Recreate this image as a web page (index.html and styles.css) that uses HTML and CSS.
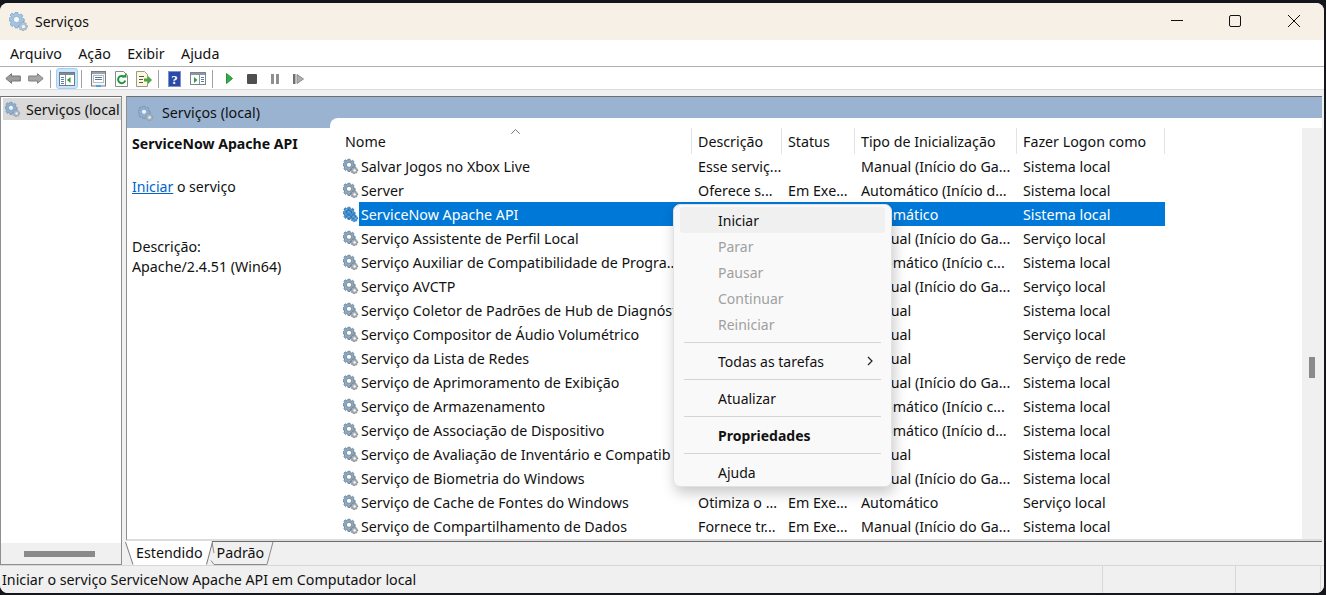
FILE: index.html
```html
<!DOCTYPE html>
<html lang="pt-BR">
<head>
<meta charset="utf-8">
<title>Serviços</title>
<link rel="stylesheet" href="styles.css">
</head>
<body>
<svg class="defs" width="0" height="0" aria-hidden="true">
  <defs>
    <pattern id="dither" width="2" height="2" patternUnits="userSpaceOnUse" patternTransform="scale(.8)">
      <rect width="2" height="2" fill="#0a6fc4"/>
      <rect width="1" height="1" fill="#8db6d6"/>
      <rect x="1" y="1" width="1" height="1" fill="#8db6d6"/>
    </pattern>
    <symbol id="gear" viewBox="0 0 20 20">
      <path class="g-body" stroke-width=".8" d="M6.200 1.500h2.600l.4 1.900 1.200.5 1.600-1 1.900 1.800-1.100 1.600.5 1.200 1.900.4v2.600l-1.900.4-.5 1.200 1.100 1.600-1.900 1.900-1.600-1.100-1.200.5-.4 1.900H6.200l-.4-1.900-1.200-.5-1.600 1.100L1.100 13l1.100-1.600-.5-1.200-1.900-.4V7.200l1.900-.4.5-1.200-1.100-1.600L3 2.200l1.600 1 1.200-.5z"/>
      <circle class="g-eye" cx="7.500" cy="8.500" r="3.200" stroke-width=".8"/>
      <path class="g-small" stroke-width=".7" d="M14 11l1.300.2.3 1 .9-.3.9.9-.5.9.6.8 1 .1v1.400l-1 .2-.4.9.5.8-1 1-.8-.5-.9.4-.2 1h-1.400l-.2-1-.9-.4-.8.5-1-1 .5-.8-.4-.9-1-.2v-1.400l1-.1.5-.8-.5-.9 1-.9.8.3.4-1z"/>
      <circle class="g-eye2" cx="14.500" cy="15.500" r="1.500"/>
    </symbol>
  </defs>
</svg>

<div class="window">
  <header class="titlebar">
    <svg class="title-icon"><use href="#gear"/></svg>
    <span class="title-text">Serviços</span>
    <div class="win-controls">
      <svg class="win-btn" viewBox="0 0 12 12"><path d="M0 5.500h12" stroke="#111"/></svg>
      <svg class="win-btn" viewBox="0 0 12 12"><rect x=".5" y=".5" width="11" height="11" rx="1.500" fill="none" stroke="#111"/></svg>
      <svg class="win-btn win-close" viewBox="0 0 12 12"><path d="M0 0l12 12M12 0L0 12" stroke="#111"/></svg>
    </div>
  </header>

  <nav class="menubar">
    <span>Arquivo</span><span>Ação</span><span>Exibir</span><span>Ajuda</span>
  </nav>

  <div class="toolbar">
    <svg class="tool t-back" viewBox="0 0 16 11"><path d="M6.500.7L.8 5.500l5.700 4.800V8h8.800V3H6.500z" fill="#9c9c9c" stroke="#747474"/></svg>
    <svg class="tool t-fwd" viewBox="0 0 16 11"><path d="M9.500.7l5.700 4.800-5.700 4.800V8H.7V3h8.800z" fill="#a6a6a6" stroke="#808080"/></svg>
    <i class="tsep s1"></i>
    <span class="tool-active">
      <svg class="tool-16" viewBox="0 0 16 14"><rect x=".5" y=".5" width="15" height="13" fill="#fff" stroke="#6f7b85"/><rect x="1" y="1" width="14" height="2" fill="#7d8a96"/><path d="M6.500 3v10" stroke="#8a96a0"/><path d="M2 5.500h3M2 7.500h3M2 9.500h3M2 11.500h3" stroke="#5a7fa8"/><path d="M11.500 5v6L8 8z" fill="#2e9e3c"/></svg>
    </span>
    <i class="tsep s2"></i>
    <svg class="tool t-a" viewBox="0 0 15 16"><rect x=".5" y=".5" width="14" height="14.500" fill="#f4f6f8" stroke="#7b7b7b"/><rect x="1" y="1" width="13" height="2" fill="#9aa3ab"/><rect x="2.500" y="4.500" width="10" height="7" fill="#fff" stroke="#b5bcc4"/><path d="M4 6.500h7M4 8.500h7" stroke="#5d7a96"/><rect x="5" y="14" width="5" height="2" fill="#4aa3e0"/></svg>
    <svg class="tool t-b" viewBox="0 0 13 16"><path d="M.5.500h8l4 4v11H.5z" fill="#fff" stroke="#8a8a8a"/><path d="M9.300 6a3.600 3.600 0 1 0 .9 3.500" fill="none" stroke="#1f9a3a" stroke-width="2"/><path d="M7 6.500h4.500V2z" fill="#1f9a3a"/></svg>
    <svg class="tool t-c" viewBox="0 0 16 16"><path d="M.5.500h8l3 3v12h-11z" fill="#fdf7dc" stroke="#9a9a88"/><path d="M3 5.500h5M3 8.500h4M3 11.500h4" stroke="#4d5b66"/><path d="M8 7.500h4V5l4 4-4 4v-2.500H8z" fill="#49a83c"/></svg>
    <i class="tsep s3"></i>
    <svg class="tool t-d" viewBox="0 0 13 16"><rect width="13" height="16" fill="#2b4aa8"/><rect x=".5" y=".5" width="12" height="15" fill="none" stroke="#7d90d0"/><text x="6.500" y="13" class="help-q">?</text></svg>
    <svg class="tool t-e" viewBox="0 0 16 13"><rect x=".5" y=".5" width="15" height="12" fill="#fff" stroke="#7b858e"/><rect x="1" y="1" width="14" height="2" fill="#8a96a0"/><path d="M9.500 3v9" stroke="#8a96a0"/><path d="M11 5.500h3M11 7.500h3M11 9.500h3" stroke="#5a7fa8"/><path d="M4 5v6l3.500-3z" fill="#2e9e3c"/></svg>
    <i class="tsep s4"></i>
    <svg class="tool t-play" viewBox="0 0 7 11"><path d="M.5.500L6.500 5.500.5 10.500z" fill="#35ad45" stroke="#2a8f39"/></svg>
    <svg class="tool t-stop" viewBox="0 0 10 10"><rect width="10" height="10" rx="1" fill="#4f4f4f"/></svg>
    <svg class="tool t-pause" viewBox="0 0 8 10"><rect width="3" height="10" fill="#8f8f8f"/><rect x="5" width="3" height="10" fill="#8f8f8f"/></svg>
    <svg class="tool t-resume" viewBox="0 0 11 10"><rect width="2.500" height="10" fill="#6f6f6f"/><path d="M4 .5L10.500 5 4 9.500z" fill="#b0b0b0" stroke="#8a8a8a"/></svg>
  </div>

  <main class="content">
    <aside class="tree">
      <div class="tree-body">
        <div class="tree-item">
          <svg class="icon-16 soft"><use href="#gear"/></svg>
          <span>Serviços (local</span>
        </div>
      </div>
      <div class="hscroll"><i></i></div>
    </aside>

    <section class="pane">
      <div class="pane-frame">
        <div class="pane-body">
          <div class="leftcol">
            <div class="pane-head">
              <svg class="icon-16 soft"><use href="#gear"/></svg>
              <span>Serviços (local)</span>
            </div>
            <div class="detail">
              <h1>ServiceNow Apache API</h1>
              <p class="start"><a>Iniciar</a> o serviço</p>
              <p class="desc">Descrição:<br>Apache/2.4.51 (Win64)</p>
            </div>
          </div>
          <div class="listwrap">
            <div class="list">
              <div class="sort-caret"><svg viewBox="0 0 9 5" width="9" height="5"><path d="M.3 4.800L4.500.5l4.200 4.300" fill="none" stroke="#777"/></svg></div>
              <div class="row head">
                <span>Nome</span><span>Descrição</span><span>Status</span><span>Tipo de Inicialização</span><span>Fazer Logon como</span>
              </div>
              <div class="row"><span class="n"><svg class="icon-16"><use href="#gear"/></svg><b>Salvar Jogos no Xbox Live</b></span><span>Esse serviç...</span><span></span><span>Manual (Início do Ga...</span><span>Sistema local</span></div>
              <div class="row"><span class="n"><svg class="icon-16"><use href="#gear"/></svg><b>Server</b></span><span>Oferece s...</span><span>Em Exe...</span><span>Automático (Início d...</span><span>Sistema local</span></div>
              <div class="row sel"><span class="n"><svg class="icon-16"><use href="#gear"/></svg><b>ServiceNow Apache API</b></span><span></span><span></span><span>Automático</span><span>Sistema local</span></div>
              <div class="row"><span class="n"><svg class="icon-16"><use href="#gear"/></svg><b>Serviço Assistente de Perfil Local</b></span><span></span><span></span><span>Manual (Início do Ga...</span><span>Serviço local</span></div>
              <div class="row"><span class="n"><svg class="icon-16"><use href="#gear"/></svg><b>Serviço Auxiliar de Compatibilidade de Progra...</b></span><span></span><span></span><span>Automático (Início c...</span><span>Sistema local</span></div>
              <div class="row"><span class="n"><svg class="icon-16"><use href="#gear"/></svg><b>Serviço AVCTP</b></span><span></span><span></span><span>Manual (Início do Ga...</span><span>Serviço local</span></div>
              <div class="row"><span class="n"><svg class="icon-16"><use href="#gear"/></svg><b>Serviço Coletor de Padrões de Hub de Diagnóst...</b></span><span></span><span></span><span>Manual</span><span>Sistema local</span></div>
              <div class="row"><span class="n"><svg class="icon-16"><use href="#gear"/></svg><b>Serviço Compositor de Áudio Volumétrico</b></span><span></span><span></span><span>Manual</span><span>Serviço local</span></div>
              <div class="row"><span class="n"><svg class="icon-16"><use href="#gear"/></svg><b>Serviço da Lista de Redes</b></span><span></span><span></span><span>Manual</span><span>Serviço de rede</span></div>
              <div class="row"><span class="n"><svg class="icon-16"><use href="#gear"/></svg><b>Serviço de Aprimoramento de Exibição</b></span><span></span><span></span><span>Manual (Início do Ga...</span><span>Sistema local</span></div>
              <div class="row"><span class="n"><svg class="icon-16"><use href="#gear"/></svg><b>Serviço de Armazenamento</b></span><span></span><span></span><span>Automático (Início c...</span><span>Sistema local</span></div>
              <div class="row"><span class="n"><svg class="icon-16"><use href="#gear"/></svg><b>Serviço de Associação de Dispositivo</b></span><span></span><span></span><span>Automático (Início d...</span><span>Sistema local</span></div>
              <div class="row"><span class="n"><svg class="icon-16"><use href="#gear"/></svg><b>Serviço de Avaliação de Inventário e Compatib</b></span><span></span><span></span><span>Manual</span><span>Sistema local</span></div>
              <div class="row"><span class="n"><svg class="icon-16"><use href="#gear"/></svg><b>Serviço de Biometria do Windows</b></span><span></span><span></span><span>Manual (Início do Ga...</span><span>Sistema local</span></div>
              <div class="row"><span class="n"><svg class="icon-16"><use href="#gear"/></svg><b>Serviço de Cache de Fontes do Windows</b></span><span>Otimiza o ...</span><span>Em Exe...</span><span>Automático</span><span>Serviço local</span></div>
              <div class="row"><span class="n"><svg class="icon-16"><use href="#gear"/></svg><b>Serviço de Compartilhamento de Dados</b></span><span>Fornece tr...</span><span>Em Exe...</span><span>Manual (Início do Ga...</span><span>Sistema local</span></div>
            </div>
            <div class="vscroll"><i></i></div>
          </div>
        </div>
      </div>
      <div class="tabs">
        <svg class="tab-art" viewBox="0 0 150 23" width="150" height="23" aria-hidden="true">
          <path d="M141 22.500h-53l-3-4M88 11l-2-10.500M147 0l-6 22.500" fill="none" stroke="#8a8a8a"/>
          <path d="M-1 -1L7 23H80L86 -1z" fill="#fff"/>
          <path d="M-.5 0L7 22.500M86.500 0L80.500 22.500" fill="none" stroke="#7a7a7a"/>
        </svg>
        <span class="tab">Estendido</span>
        <span class="tab">Padrão</span>
      </div>
    </section>

    <div class="ctx">
      <div class="ci hot">Iniciar</div>
      <div class="ci off">Parar</div>
      <div class="ci off">Pausar</div>
      <div class="ci off">Continuar</div>
      <div class="ci off">Reiniciar</div>
      <hr>
      <div class="ci">Todas as tarefas<svg class="chev" viewBox="0 0 6 10"><path d="M1 1l4 4-4 4" fill="none" stroke="#222" stroke-width="1.200"/></svg></div>
      <hr>
      <div class="ci">Atualizar</div>
      <hr>
      <div class="ci strong">Propriedades</div>
      <hr>
      <div class="ci">Ajuda</div>
    </div>
  </main>

  <footer class="status">
    <span class="s-main">Iniciar o serviço ServiceNow Apache API em Computador local</span>
    <span class="s-cell"></span>
    <span class="s-end"></span>
  </footer>
</div>
</body>
</html>
```

FILE: styles.css
```css
* { box-sizing: border-box; }
html, body { margin: 0; height: 100%; }
body {
  background: #15151c;
  overflow: hidden;
  font-family: "Noto Sans", "Open Sans", sans-serif;
  font-size: 14.25px;
  color: #111;
  --g1: #8ea8bf;
  --g2: #4f6b80;
  --g3: #a3adb6;
  --g4: #66727c;
  --eye: #fff;
}
.defs { position: absolute; }
.g-body { fill: var(--g1); stroke: var(--g2); }
.g-eye { fill: var(--eye); stroke: var(--g2); }
.g-small { fill: var(--g3); stroke: var(--g4); }
.g-eye2 { fill: var(--eye); }
.window {
  height: 590px;
  margin: 3px 2px 0 0;
  background: #f0f0f0;
  border-radius: 8px;
  overflow: hidden;
  display: flex;
  flex-direction: column;
}
.titlebar {
  height: 37px;
  flex: none;
  background: #f7f0e7;
  display: flex;
  align-items: center;
  padding: 0 0 1px 9px;
}
.title-icon { width: 20px; height: 20px; --g1: #a4c5e2; --g2: #7ea3c3; --g3: #b4c6d6; --g4: #8ba3b8; --eye: #f4f8fb; }
.title-text { margin-left: 6px; font-size: 14px; }
.win-controls { margin-left: auto; display: flex; align-items: center; gap: 46px; padding-right: 24px; }
.win-btn { width: 12px; height: 12px; display: block; }
.win-close { margin-left: 1px; }
.menubar {
  height: 27px;
  flex: none;
  background: #fff;
  border-bottom: 1px solid #b0b0b0;
  display: flex;
  align-items: center;
  gap: 16.4px;
  padding-left: 10px;
}
.toolbar {
  height: 23px;
  flex: none;
  background: #fff;
  border-bottom: 1px solid #dcdcdc;
  display: flex;
  align-items: center;
  padding: 1px 0 0 5px;
}
.tool { display: block; flex: none; }
.tool-16 { width: 16px; height: 14px; display: block; }
.t-back, .t-fwd { width: 16px; height: 11px; }
.t-fwd { margin-left: 7px; }
.tsep { width: 1px; height: 18px; background: #a0a0a0; flex: none; }
.s1 { margin: 0 5px 0 6px; }
.s2 { margin: 0 9px 0 3px; }
.s3 { margin: 0 9px 0 6px; }
.s4 { margin: 0 13px 0 6px; }
.tool-active {
  width: 22px; height: 21px; flex: none;
  background: #cce4f7; border: 1px solid #99d1ff; border-radius: 3px;
  display: flex; align-items: center; justify-content: center;
}
.t-a { width: 15px; height: 16px; }
.t-b { width: 13px; height: 16px; margin-left: 9px; }
.t-c { width: 16px; height: 16px; margin-left: 8px; }
.t-d { width: 13px; height: 16px; }
.t-e { width: 16px; height: 13px; margin-left: 9px; }
.t-play { width: 7px; height: 11px; }
.t-stop { width: 10px; height: 10px; margin-left: 14px; }
.t-pause { width: 8px; height: 10px; margin-left: 14px; }
.t-resume { width: 11px; height: 10px; margin-left: 14px; }
.help-q { font: bold 13px "Liberation Serif", serif; fill: #fff; text-anchor: middle; }

.content {
  position: relative;
  flex: 1;
  min-height: 0;
  display: flex;
  gap: 4px;
  padding-top: 6px;
  background: #f0f0f0;
}
.tree {
  width: 122px;
  flex: none;
  border: 1px solid #8f8f8f;
  border-top-color: #6e6e6e;
  background: #fff;
  display: flex;
  flex-direction: column;
}
.tree-body { flex: 1; padding-top: 1px; overflow: hidden; }
.tree-item {
  height: 22px;
  margin: 0 0 0 2px;
  background: #d9d9d9;
  display: flex;
  align-items: center;
  padding-left: 2px;
  gap: 5px;
  white-space: nowrap;
  overflow: hidden;
}
.icon-16 { width: 16px; height: 16px; flex: none; display: block; }
.soft { --g1: #8fb0cf; --g2: #6d8fae; --g3: #a9b7c4; --g4: #8797a6; --eye: #eef3f8; }
.hscroll { height: 21px; background: #f0f0f0; display: flex; align-items: center; justify-content: center; flex: none; }
.hscroll i { width: 71px; height: 6px; background: #8a8a8a; display: block; margin-right: 4px; }

.pane { flex: 1; min-width: 0; display: flex; flex-direction: column; margin-right: 2px; }
.pane-frame {
  flex: 1;
  min-height: 0;
  border-top: 1px solid #6e6e6e;
  border-left: 1px solid #8f8f8f;
  border-bottom: 2px solid #dcdcdc;
  background: #fff;
  display: flex;
  flex-direction: column;
}
.pane-body { flex: 1; min-height: 0; display: flex; background: #9ab3d0; }
.leftcol { width: 203px; flex: none; display: flex; flex-direction: column; }
.pane-head {
  height: 31px;
  flex: none;
  display: flex;
  align-items: center;
  gap: 8px;
  padding-left: 11px;
}
.detail {
  flex: 1;
  background: #fff;
  padding: 6px 0 0 5px;
  line-height: 20px;
}
.detail h1 { margin: 0; font-size: 14.1px; font-weight: 700; line-height: 20px; }
.detail p { margin: 0; }
.start { padding-top: 23px; font-size: 14.1px; }
.start a { color: #0066cc; text-decoration: underline; }
.desc { padding-top: 40px; }
.listwrap {
  flex: 1; min-width: 0;
  margin-top: 21px;
  background: #fff;
  border-radius: 8px 0 0 0;
  display: flex;
  overflow: hidden;
}
.list { flex: 1; min-width: 0; padding-top: 10px; position: relative; overflow: hidden; }
.sort-caret { position: absolute; left: 181px; top: 11px; line-height: 0; }
.row {
  display: grid;
  grid-template-columns: 362px 90px 73px 162px 148px;
  width: 835px;
  height: 24px;
  align-items: center;
  white-space: nowrap;
}
.row > span { overflow: hidden; padding-left: 6px; }
.row.head { height: 26px; }
.row.head > span { border-right: 1px solid #e3e3e3; height: 26px; line-height: 28px; }
.row.head > span:first-child { padding-left: 15px; }
.row .n { display: flex; align-items: center; padding-left: 13px; gap: 2px; height: 22px; }
.row .n b { font-weight: 400; display: block; flex: 1; min-width: 0; overflow: hidden; }
.row.sel { background: linear-gradient(to right, transparent 29px, #0078d7 29px); }
.row.sel > span { color: #fff; }
.row.sel .icon-16 { --g1: url(#dither); --g2: #1c6aa8; --g3: url(#dither); --g4: #1c6aa8; --eye: url(#dither); }
.vscroll { width: 20px; flex: none; margin-top: 10px; background: #f0f0f0; position: relative; }
.vscroll i { position: absolute; left: 7px; top: 229px; width: 6px; height: 21px; background: #8a8a8a; }

.tabs {
  position: relative;
  height: 24px;
  flex: none;
  background: #f0f0f0;
  border-top: 1px solid #6e6e6e;
  display: flex;
  gap: 14px;
  padding-left: 10px;
}
.tab-art { position: absolute; left: 0; top: 0; overflow: visible; }
.tab { position: relative; line-height: 22px; }

.ctx {
  position: absolute;
  left: 673px;
  top: 114px;
  width: 219px;
  padding: 2px 6px 1px;
  background: #f9f9f9;
  border: 1px solid #e2e2e2;
  border-radius: 7px;
  box-shadow: 2px 6px 14px rgba(0,0,0,.22);
  font-size: 14px;
}
.ci { height: 26px; line-height: 27px; padding-left: 38px; border-radius: 4px; position: relative; }
.ci.hot { background: #f0f0f0; }
.ci.off { color: #a0a0a0; }
.ci.strong { font-weight: 700; }
.ctx hr { border: 0; border-top: 1px solid #d4d4d4; margin: 5px 4px; }
.chev { position: absolute; right: 12px; top: 8px; width: 6px; height: 10px; }

.status {
  height: 28px;
  flex: none;
  background: #f0f0f0;
  border-top: 1px solid #d8d8d8;
  display: flex;
  align-items: center;
  padding: 0 3px 0 2px;
}
.s-main { flex: 1; }
.s-cell { width: 133px; height: 27px; border-left: 1px solid #d8d8d8; }
.s-end { width: 86px; height: 27px; border-left: 1px solid #d8d8d8; border-right: 1px solid #d8d8d8; }
```
